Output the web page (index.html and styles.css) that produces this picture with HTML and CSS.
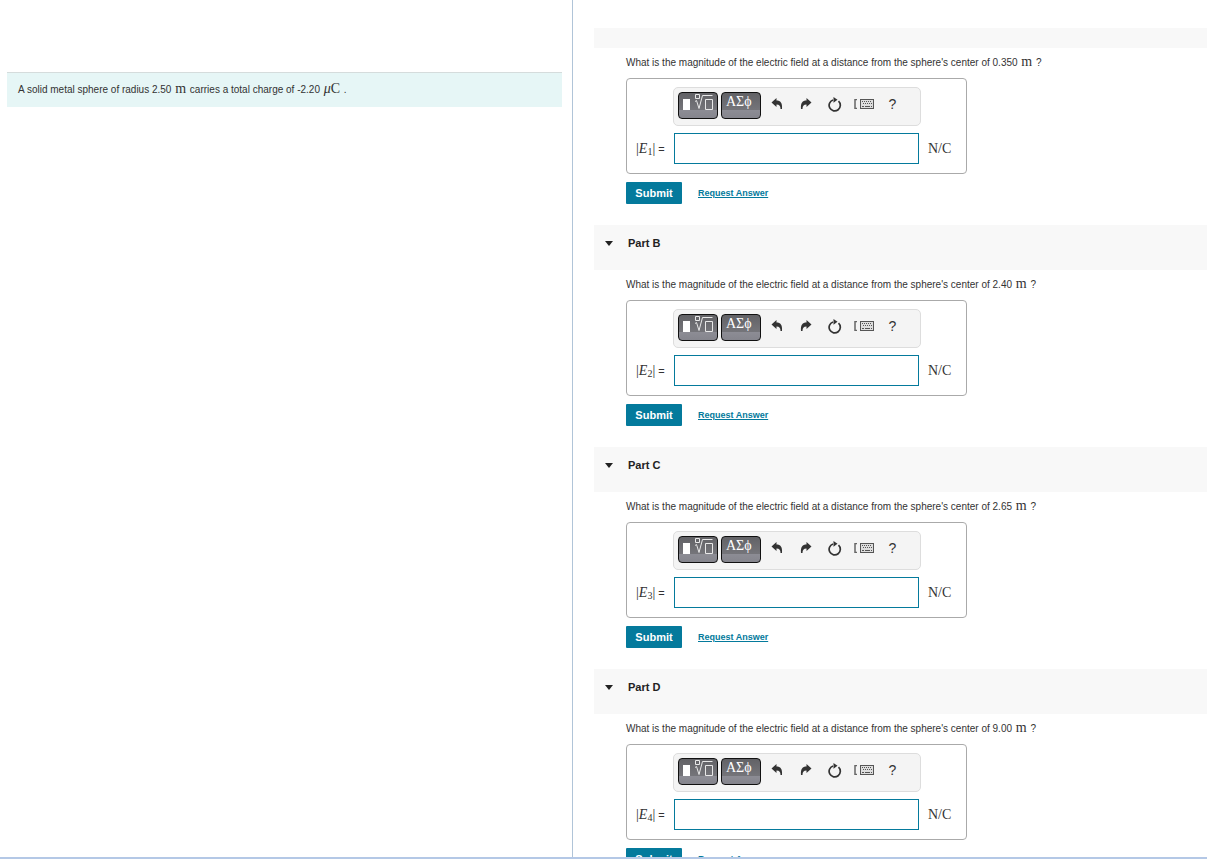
FILE: index.html
```html
<!DOCTYPE html>
<html lang="en">
<head>
    <meta charset="UTF-8">
    <meta name="viewport" content="width=device-width, initial-scale=1.0">
    <title>Electric Field of a Metal Sphere</title>
    <link rel="stylesheet" href="styles.css">
</head>
<body>
    <!-- icons shared by every answer toolbar -->
    <svg class="icon-defs" aria-hidden="true">
        <symbol id="icon-template" viewBox="0 0 38 25">
            <rect x="4" y="6" width="7" height="11" fill="#fff"/>
            <path d="M16.500 1.500h4v4h-4zM16 8.500l1.500-1 2.500 8 3.500-13h10M26.500 6.500h7v10h-7z" fill="none" stroke="#e8e8e8"/>
        </symbol>
        <symbol id="icon-undo" viewBox="0 0 12 12">
            <path d="M0.500 4.500L5.500 0v2.500c4 0 6 2.300 5.500 8.500h-1.500C9.500 8 8.500 6.500 5.500 6.500v2.500z" fill="#333"/>
        </symbol>
        <symbol id="icon-redo" viewBox="0 0 12 12">
            <path d="M11.500 4.500L6.500 0v2.500c-4 0-6 2.300-5.500 8.500h1.500C2.500 8 3.500 6.500 6.500 6.500v2.500z" fill="#333"/>
        </symbol>
        <symbol id="icon-reset" viewBox="0 0 14 15">
            <path d="M10.500 4.200A5.600 5.600 0 1 1 5 3" fill="none" stroke="#333" stroke-width="1.700"/>
            <path d="M5.500 0l4 2.700-4 3z" fill="#333"/>
        </symbol>
        <symbol id="icon-keyboard" viewBox="0 0 20 10">
            <path d="M3 .5H1v9h2" fill="none" stroke="#666" stroke-width="1.500"/>
            <rect x="6.500" y=".5" width="13" height="9" fill="#ddd" stroke="#555"/>
            <path d="M8 2.500h10M9 4.500h9" stroke="#555" stroke-dasharray="1 1"/>
            <path d="M8 7.500h2M11 7.500h5M17 7.500h1" stroke="#555"/>
        </symbol>
    </svg>

    <div class="page">
        <aside class="problem-pane">
            <p class="problem">A solid metal sphere of radius 2.50 <span class="math">m</span> carries a total charge of -2.20 <span class="math"><i>μ</i>C</span> .</p>
        </aside>

        <main class="parts-pane">
            <section class="part">
                <div class="part-header part-header-cut"></div>
                <form class="part-body">
                    <p class="question">What is the magnitude of the electric field at a distance from the sphere's center of 0.350 <span class="math">m</span> ?</p>
                    <div class="answer-box">
                        <div class="toolbar">
                            <button type="button" class="palette" aria-label="Templates"><svg><use href="#icon-template"/></svg></button>
                            <button type="button" class="palette" aria-label="Symbols">ΑΣϕ</button>
                            <button type="button" class="tool" aria-label="Undo"><svg width="12" height="12"><use href="#icon-undo"/></svg></button>
                            <button type="button" class="tool" aria-label="Redo"><svg width="12" height="12"><use href="#icon-redo"/></svg></button>
                            <button type="button" class="tool" aria-label="Reset"><svg width="14" height="15"><use href="#icon-reset"/></svg></button>
                            <button type="button" class="tool" aria-label="Keyboard shortcuts"><svg width="20" height="10"><use href="#icon-keyboard"/></svg></button>
                            <button type="button" class="tool help" aria-label="Help">?</button>
                        </div>
                        <label for="answer-1"><span class="math">|<i>E</i><sub>1</sub>|</span> =</label>
                        <input type="text" id="answer-1" name="answer-1">
                        <span class="math unit">N/C</span>
                    </div>
                    <div class="actions">
                        <button type="submit" class="submit">Submit</button>
                        <a href="#" class="request">Request Answer</a>
                    </div>
                </form>
            </section>

            <section class="part">
                <div class="part-header"><span class="caret"></span><h2>Part B</h2></div>
                <form class="part-body">
                    <p class="question">What is the magnitude of the electric field at a distance from the sphere's center of 2.40 <span class="math">m</span> ?</p>
                    <div class="answer-box">
                        <div class="toolbar">
                            <button type="button" class="palette" aria-label="Templates"><svg><use href="#icon-template"/></svg></button>
                            <button type="button" class="palette" aria-label="Symbols">ΑΣϕ</button>
                            <button type="button" class="tool" aria-label="Undo"><svg width="12" height="12"><use href="#icon-undo"/></svg></button>
                            <button type="button" class="tool" aria-label="Redo"><svg width="12" height="12"><use href="#icon-redo"/></svg></button>
                            <button type="button" class="tool" aria-label="Reset"><svg width="14" height="15"><use href="#icon-reset"/></svg></button>
                            <button type="button" class="tool" aria-label="Keyboard shortcuts"><svg width="20" height="10"><use href="#icon-keyboard"/></svg></button>
                            <button type="button" class="tool help" aria-label="Help">?</button>
                        </div>
                        <label for="answer-2"><span class="math">|<i>E</i><sub>2</sub>|</span> =</label>
                        <input type="text" id="answer-2" name="answer-2">
                        <span class="math unit">N/C</span>
                    </div>
                    <div class="actions">
                        <button type="submit" class="submit">Submit</button>
                        <a href="#" class="request">Request Answer</a>
                    </div>
                </form>
            </section>

            <section class="part">
                <div class="part-header"><span class="caret"></span><h2>Part C</h2></div>
                <form class="part-body">
                    <p class="question">What is the magnitude of the electric field at a distance from the sphere's center of 2.65 <span class="math">m</span> ?</p>
                    <div class="answer-box">
                        <div class="toolbar">
                            <button type="button" class="palette" aria-label="Templates"><svg><use href="#icon-template"/></svg></button>
                            <button type="button" class="palette" aria-label="Symbols">ΑΣϕ</button>
                            <button type="button" class="tool" aria-label="Undo"><svg width="12" height="12"><use href="#icon-undo"/></svg></button>
                            <button type="button" class="tool" aria-label="Redo"><svg width="12" height="12"><use href="#icon-redo"/></svg></button>
                            <button type="button" class="tool" aria-label="Reset"><svg width="14" height="15"><use href="#icon-reset"/></svg></button>
                            <button type="button" class="tool" aria-label="Keyboard shortcuts"><svg width="20" height="10"><use href="#icon-keyboard"/></svg></button>
                            <button type="button" class="tool help" aria-label="Help">?</button>
                        </div>
                        <label for="answer-3"><span class="math">|<i>E</i><sub>3</sub>|</span> =</label>
                        <input type="text" id="answer-3" name="answer-3">
                        <span class="math unit">N/C</span>
                    </div>
                    <div class="actions">
                        <button type="submit" class="submit">Submit</button>
                        <a href="#" class="request">Request Answer</a>
                    </div>
                </form>
            </section>

            <section class="part">
                <div class="part-header"><span class="caret"></span><h2>Part D</h2></div>
                <form class="part-body">
                    <p class="question">What is the magnitude of the electric field at a distance from the sphere's center of 9.00 <span class="math">m</span> ?</p>
                    <div class="answer-box">
                        <div class="toolbar">
                            <button type="button" class="palette" aria-label="Templates"><svg><use href="#icon-template"/></svg></button>
                            <button type="button" class="palette" aria-label="Symbols">ΑΣϕ</button>
                            <button type="button" class="tool" aria-label="Undo"><svg width="12" height="12"><use href="#icon-undo"/></svg></button>
                            <button type="button" class="tool" aria-label="Redo"><svg width="12" height="12"><use href="#icon-redo"/></svg></button>
                            <button type="button" class="tool" aria-label="Reset"><svg width="14" height="15"><use href="#icon-reset"/></svg></button>
                            <button type="button" class="tool" aria-label="Keyboard shortcuts"><svg width="20" height="10"><use href="#icon-keyboard"/></svg></button>
                            <button type="button" class="tool help" aria-label="Help">?</button>
                        </div>
                        <label for="answer-4"><span class="math">|<i>E</i><sub>4</sub>|</span> =</label>
                        <input type="text" id="answer-4" name="answer-4">
                        <span class="math unit">N/C</span>
                    </div>
                    <div class="actions">
                        <button type="submit" class="submit">Submit</button>
                        <a href="#" class="request">Request Answer</a>
                    </div>
                </form>
            </section>
        </main>
    </div>
</body>
</html>
```
FILE: styles.css
```css
* {
    box-sizing: border-box;
}

body {
    margin: 0;
    font-family: "Liberation Sans", Arial, sans-serif;
    font-size: 10px;
    line-height: 16px;
    color: #333;
    background-color: #fff;
}

p, h2 {
    margin: 0;
}

.icon-defs {
    display: none;
}

.page {
    display: flex;
    height: 100vh;
    overflow: hidden;
    border-bottom: 2px solid #b4c8e6;
}

.problem-pane {
    flex: 0 0 573px;
    padding: 72px 10px 0 7px;
    border-right: 1px solid #b0c4d8;
}

.problem {
    height: 35px;
    padding: 8px 11px;
    background-color: #e6f6f6;
    border-top: 1px solid #d5dcdc;
}

.math {
    font-family: "Liberation Serif", "Times New Roman", serif;
    font-size: 14px;
}

.problem .math,
.question .math {
    margin: 0 1px;
}

.parts-pane {
    flex: 1;
    min-width: 0;
    padding: 28px 0 0 21px;
    overflow: hidden;
}

.part-header {
    display: flex;
    gap: 15px;
    height: 45px;
    padding: 10px 11px;
    background-color: #f8f8f8;
}

.part-header-cut {
    height: 20px;
}

.part-header h2 {
    font-size: 11px;
    line-height: 16px;
    color: #222;
}

.caret {
    margin-top: 6px;
    height: 5px;
    border: 4px solid transparent;
    border-top: 5px solid #222;
    border-bottom: 0;
}

.part-body {
    padding: 6px 0 21px 32px;
}

.question {
    height: 16px;
}

.answer-box {
    display: grid;
    grid-template-columns: 38px 245px auto;
    align-items: center;
    row-gap: 7px;
    width: 341px;
    height: 96px;
    margin-top: 8px;
    padding: 8px 0 9px 9px;
    border: 1px solid #aaa;
    border-radius: 4px;
}

.toolbar {
    grid-column: 2 / 4;
    display: flex;
    width: 248px;
    height: 39px;
    margin-left: -1px;
    padding: 4px;
    background-color: #f4f4f4;
    border: 1px solid #ddd;
    border-radius: 5px;
}

.palette {
    display: flex;
    width: 40px;
    height: 27px;
    padding: 0 4px;
    font-family: "Liberation Serif", "Times New Roman", serif;
    font-size: 14px;
    line-height: 17px;
    color: #fff;
    background: linear-gradient(#626266 0%, #75757a 68%, #8c8c94 70%, #85858d 100%);
    border: 1px solid #111;
    border-radius: 4px;
}

.palette + .palette {
    margin: 0 1px 0 3px;
}

.palette svg {
    flex: none;
    width: 38px;
    height: 25px;
    margin-left: -4px;
}

.tool {
    display: flex;
    align-items: center;
    justify-content: center;
    width: 29px;
    height: 24px;
    padding: 0;
    color: #333;
    background: none;
    border: 0;
}

.help {
    font-family: "Liberation Sans", Arial, sans-serif;
    font-size: 14px;
}

label {
    font-size: 11px;
}

label sub {
    font-size: 10px;
    line-height: 0;
    vertical-align: -2px;
}

.answer-box input {
    width: 245px;
    height: 31px;
    padding: 4px;
    border: 1px solid #047a9c;
}

.unit {
    margin-left: 9px;
}

.actions {
    display: flex;
    align-items: center;
    gap: 16px;
    margin-top: 8px;
}

.submit {
    width: 56px;
    height: 22px;
    padding: 0;
    font-family: "Liberation Sans", Arial, sans-serif;
    font-size: 11px;
    font-weight: bold;
    color: #fff;
    background-color: #047a9c;
    border: 0;
    border-radius: 1px;
}

.request {
    font-size: 9px;
    font-weight: bold;
    color: #047a9c;
}
```
